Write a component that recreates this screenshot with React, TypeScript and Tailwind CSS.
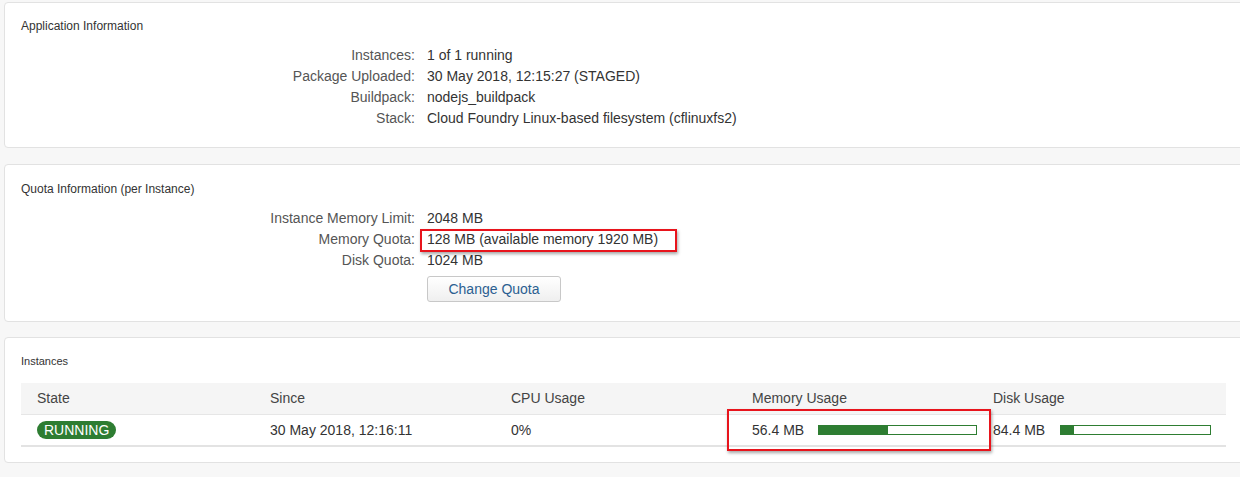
import React from 'react';

type Row = { label: string; value: string; highlight?: boolean };

const appInfo: Row[] = [
  { label: 'Instances:', value: '1 of 1 running' },
  { label: 'Package Uploaded:', value: '30 May 2018, 12:15:27 (STAGED)' },
  { label: 'Buildpack:', value: 'nodejs_buildpack' },
  { label: 'Stack:', value: 'Cloud Foundry Linux-based filesystem (cflinuxfs2)' },
];

const quotaInfo: Row[] = [
  { label: 'Instance Memory Limit:', value: '2048 MB' },
  { label: 'Memory Quota:', value: '128 MB (available memory 1920 MB)', highlight: true },
  { label: 'Disk Quota:', value: '1024 MB' },
];

const Panel: React.FC<{ title: string; className?: string; titleClass?: string; children: React.ReactNode }> = ({
  title,
  className = '',
  titleClass = 'text-[12px]',
  children,
}) => (
  <div className={`mr-[-12px] rounded-[4px] border border-[#e2e2e2] bg-white pl-4 pr-7 ${className}`}>
    <div className={`leading-4 text-[#333] ${titleClass}`}>{title}</div>
    {children}
  </div>
);

const InfoRows: React.FC<{ rows: Row[] }> = ({ rows }) => (
  <div className="grid grid-cols-[394px_1fr] gap-x-3 text-[14px] leading-[21px]">
    {rows.map((r) => (
      <React.Fragment key={r.label}>
        <div className="text-right text-[#555]">{r.label}</div>
        <div className="text-[#333]">
          {r.highlight ? (
            <span className="relative">
              {r.value}
              <span className="absolute left-[-7px] top-[-2px] h-[23px] w-[257px] border-2 border-[#e8141c] shadow-[1px_2px_3px_rgba(0,0,0,0.35)]" />
            </span>
          ) : (
            r.value
          )}
        </div>
      </React.Fragment>
    ))}
  </div>
);

const UsageBar: React.FC<{ pct: number; width: number }> = ({ pct, width }) => (
  <div className="h-[10px] border border-[#2e7d32] bg-white" style={{ width }}>
    <div className="h-full bg-[#2e7d32]" style={{ width: `${pct}%` }} />
  </div>
);

const cols = 'grid-cols-[233px_241px_241px_241px_1fr]';

const App: React.FC = () => {
  return (
    <div
      className="h-[477px] w-[1240px] overflow-hidden bg-[#f7f7f7] pl-1 pt-[2px]"
      style={{ fontFamily: '"Liberation Sans", Arial, sans-serif' }}
    >
      <Panel title="Application Information" className="h-[146px] pt-[15px]">
        <div className="mt-[11px]">
          <InfoRows rows={appInfo} />
        </div>
      </Panel>

      <Panel title="Quota Information (per Instance)" className="mt-4 h-[158px] pt-[16px]">
        <div className="mt-[11px]">
          <InfoRows rows={quotaInfo} />
        </div>
        <div className="ml-[406px] mt-[5px]">
          <button className="h-[26px] w-[134px] rounded-[3px] border border-[#c8c8c8] bg-gradient-to-b from-white to-[#efefef] text-[14px] text-[#2b5f91]">
            Change Quota
          </button>
        </div>
      </Panel>

      <Panel title="Instances" titleClass="text-[11px]" className="mt-[15px] h-[126px] pt-[15px]">
        <div className="relative mt-[14px] w-[1205px] text-[14px] text-[#333]">
          <div className={`grid h-[32px] ${cols} items-center border-b border-[#e6e6e6] bg-[#f5f5f5] pl-4 text-[#444]`}>
            <div>State</div>
            <div>Since</div>
            <div>CPU Usage</div>
            <div>Memory Usage</div>
            <div>Disk Usage</div>
          </div>
          <div className={`grid h-[32px] ${cols} items-center border-b-2 border-[#e3e3e3] pl-4`}>
            <div>
              <span className="inline-block rounded-full bg-[#2e7d32] px-[7px] text-[14px] leading-[18px] text-white">
                RUNNING
              </span>
            </div>
            <div>30 May 2018, 12:16:11</div>
            <div>0%</div>
            <div className="flex items-center">
              <span className="w-[66px]">56.4 MB</span>
              <UsageBar pct={44} width={159} />
            </div>
            <div className="flex items-center">
              <span className="w-[67px]">84.4 MB</span>
              <UsageBar pct={9} width={151} />
            </div>
          </div>
          <div className="absolute left-[706px] top-[26px] h-[42px] w-[264px] border-2 border-[#e8141c] shadow-[1px_2px_3px_rgba(0,0,0,0.35)]" />
        </div>
      </Panel>
    </div>
  );
};

export default App;
